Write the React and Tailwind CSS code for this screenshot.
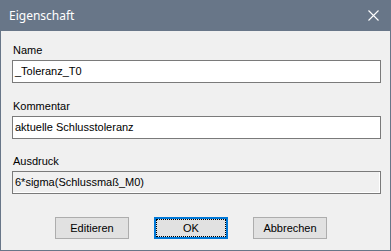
import React from 'react';

const Field = ({ label, value, readOnly, className }) => (
  <div className={className}>
    <div className="h-[13px] pl-[1px] text-[11px] leading-[13px]">{label}</div>
    <div
      className={`mt-[3px] flex h-[23px] w-[369px] items-center border border-[#7a7a7a] pl-[2px] text-[11px] ${
        readOnly ? 'bg-[#f0f0f0] shadow-[inset_-1px_-1px_0_#ffffff]' : 'bg-white'
      }`}
    >
      {value}
    </div>
  </div>
);

const Button = ({ children, focused }) => (
  <div
    className={`flex h-[22px] w-[74px] items-center justify-center bg-[#e1e1e1] text-[11px] ${
      focused ? 'border-2 border-[#0078d7]' : 'border border-[#adadad]'
    }`}
  >
    {focused ? (
      <div className="flex h-full w-full items-center justify-center border border-dotted border-black">
        {children}
      </div>
    ) : (
      children
    )}
  </div>
);

export default function App() {
  return (
    <div className="flex h-[251px] w-[391px] flex-col bg-[#687688] px-px pb-px font-['Liberation_Sans',Arial,sans-serif] text-black">
      <div className="flex h-[31px] items-center justify-between pl-[8px] pr-[10px]">
        <span className="font-['Segoe_UI','Noto_Sans',sans-serif] text-[12px] text-white">Eigenschaft</span>
        <svg width="11" height="11" viewBox="0 0 11 11" className="mr-[1px]">
          <path d="M0.5 0.5 L10.5 10.5 M10.5 0.5 L0.5 10.5" stroke="#ffffff" strokeWidth="1.1" />
        </svg>
      </div>
      <div className="flex flex-1 flex-col bg-[#f0f0f0] pl-[11px] pt-[13px]">
        <Field label="Name" value="_Toleranz_T0" />
        <Field className="mt-[17px]" label="Kommentar" value="aktuelle Schlusstoleranz" />
        <Field className="mt-[16px]" label="Ausdruck" value="6*sigma(Schlussmaß_M0)" readOnly />
        <div className="mt-[23px] flex gap-[25px] pl-[43px]">
          <Button>Editieren</Button>
          <Button focused>OK</Button>
          <Button>Abbrechen</Button>
        </div>
      </div>
    </div>
  );
}
